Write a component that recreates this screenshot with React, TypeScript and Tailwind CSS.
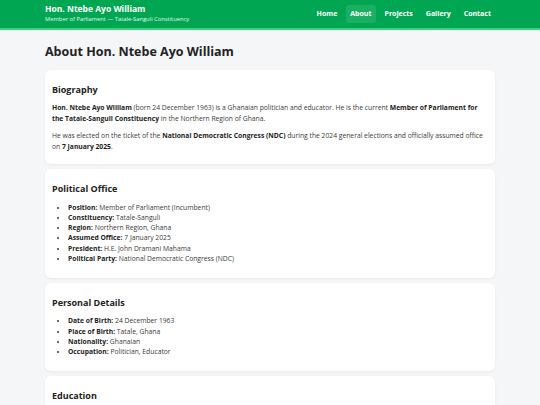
export default function App() {
  const political = [
    ["Position:", "Member of Parliament (Incumbent)"],
    ["Constituency:", "Tatale-Sanguli"],
    ["Region:", "Northern Region, Ghana"],
    ["Assumed Office:", "7 January 2025"],
    ["President:", "H.E. John Dramani Mahama"],
    ["Political Party:", "National Democratic Congress (NDC)"],
  ]
  const personal = [
    ["Date of Birth:", "24 December 1963"],
    ["Place of Birth:", "Tatale, Ghana"],
    ["Nationality:", "Ghanaian"],
    ["Occupation:", "Politician, Educator"],
  ]

  return (
    <div className="min-h-[405px] bg-[#f5f6f8] text-[#3a3a3a] font-['Open_Sans',sans-serif]">
      <header className="bg-[#00a651] border-b-2 border-[#3fd07f]">
        <div className="mx-[45px] h-[28px] flex items-center justify-between">
          <div className="leading-none">
            <div className="text-white font-bold text-[8.5px]">Hon. Ntebe Ayo William</div>
            <div className="text-[#e6f7ec] text-[5.8px] mt-[3px]">Member of Parliament — Tatale-Sanguli Constituency</div>
          </div>
          <nav className="flex items-center gap-[5px] text-white text-[7px] font-bold">
            <span className="px-[4px] py-[4px]">Home</span>
            <span className="px-[4px] py-[4px] rounded-[3px] bg-white/10">About</span>
            <span className="px-[4px] py-[4px]">Projects</span>
            <span className="px-[4px] py-[4px]">Gallery</span>
            <span className="px-[4px] py-[4px]">Contact</span>
          </nav>
        </div>
      </header>

      <main className="mx-[45px] pt-[13px]">
        <h1 className="text-[12.5px] font-bold text-[#222] mb-[8px]">About Hon. Ntebe Ayo William</h1>

        <section className="bg-white rounded-[6px] shadow-[0_1px_3px_rgba(0,0,0,0.06)] px-[7px] pt-[13px] pb-[12px] mb-[5px]">
          <h2 className="text-[9px] font-bold text-[#222] mb-[7px]">Biography</h2>
          <p className="text-[6.75px] leading-[10.5px] mb-[7px]">
            <b className="text-[#222]">Hon. Ntebe Ayo William</b> (born 24 December 1963) is a Ghanaian politician and educator. He is the current <b className="text-[#222]">Member of Parliament for the Tatale-Sanguli Constituency</b> in the Northern Region of Ghana.
          </p>
          <p className="text-[6.75px] leading-[10.5px]">
            He was elected on the ticket of the <b className="text-[#222]">National Democratic Congress (NDC)</b> during the 2024 general elections and officially assumed office on <b className="text-[#222]">7 January 2025</b>.
          </p>
        </section>

        <section className="bg-white rounded-[6px] shadow-[0_1px_3px_rgba(0,0,0,0.06)] px-[7px] pt-[13px] pb-[14px] mb-[5px]">
          <h2 className="text-[9px] font-bold text-[#222] mb-[7px]">Political Office</h2>
          <ul className="list-disc pl-[16px] text-[6.75px] leading-[10.2px]">
            {political.map(([k, v]) => (
              <li key={k}><b className="text-[#222]">{k}</b> {v}</li>
            ))}
          </ul>
        </section>

        <section className="bg-white rounded-[6px] shadow-[0_1px_3px_rgba(0,0,0,0.06)] px-[7px] pt-[13px] pb-[14px] mb-[5px]">
          <h2 className="text-[9px] font-bold text-[#222] mb-[7px]">Personal Details</h2>
          <ul className="list-disc pl-[16px] text-[6.75px] leading-[10.2px]">
            {personal.map(([k, v]) => (
              <li key={k}><b className="text-[#222]">{k}</b> {v}</li>
            ))}
          </ul>
        </section>

        <section className="bg-white rounded-[6px] shadow-[0_1px_3px_rgba(0,0,0,0.06)] px-[7px] pt-[13px] pb-[14px]">
          <h2 className="text-[9px] font-bold text-[#222] mb-[7px]">Education</h2>
          <ul className="list-disc pl-[16px] text-[6.75px] leading-[10.2px]">
            <li><b className="text-[#222]">Teacher Training:</b> Certificate in Education</li>
          </ul>
        </section>
      </main>
    </div>
  )
}
